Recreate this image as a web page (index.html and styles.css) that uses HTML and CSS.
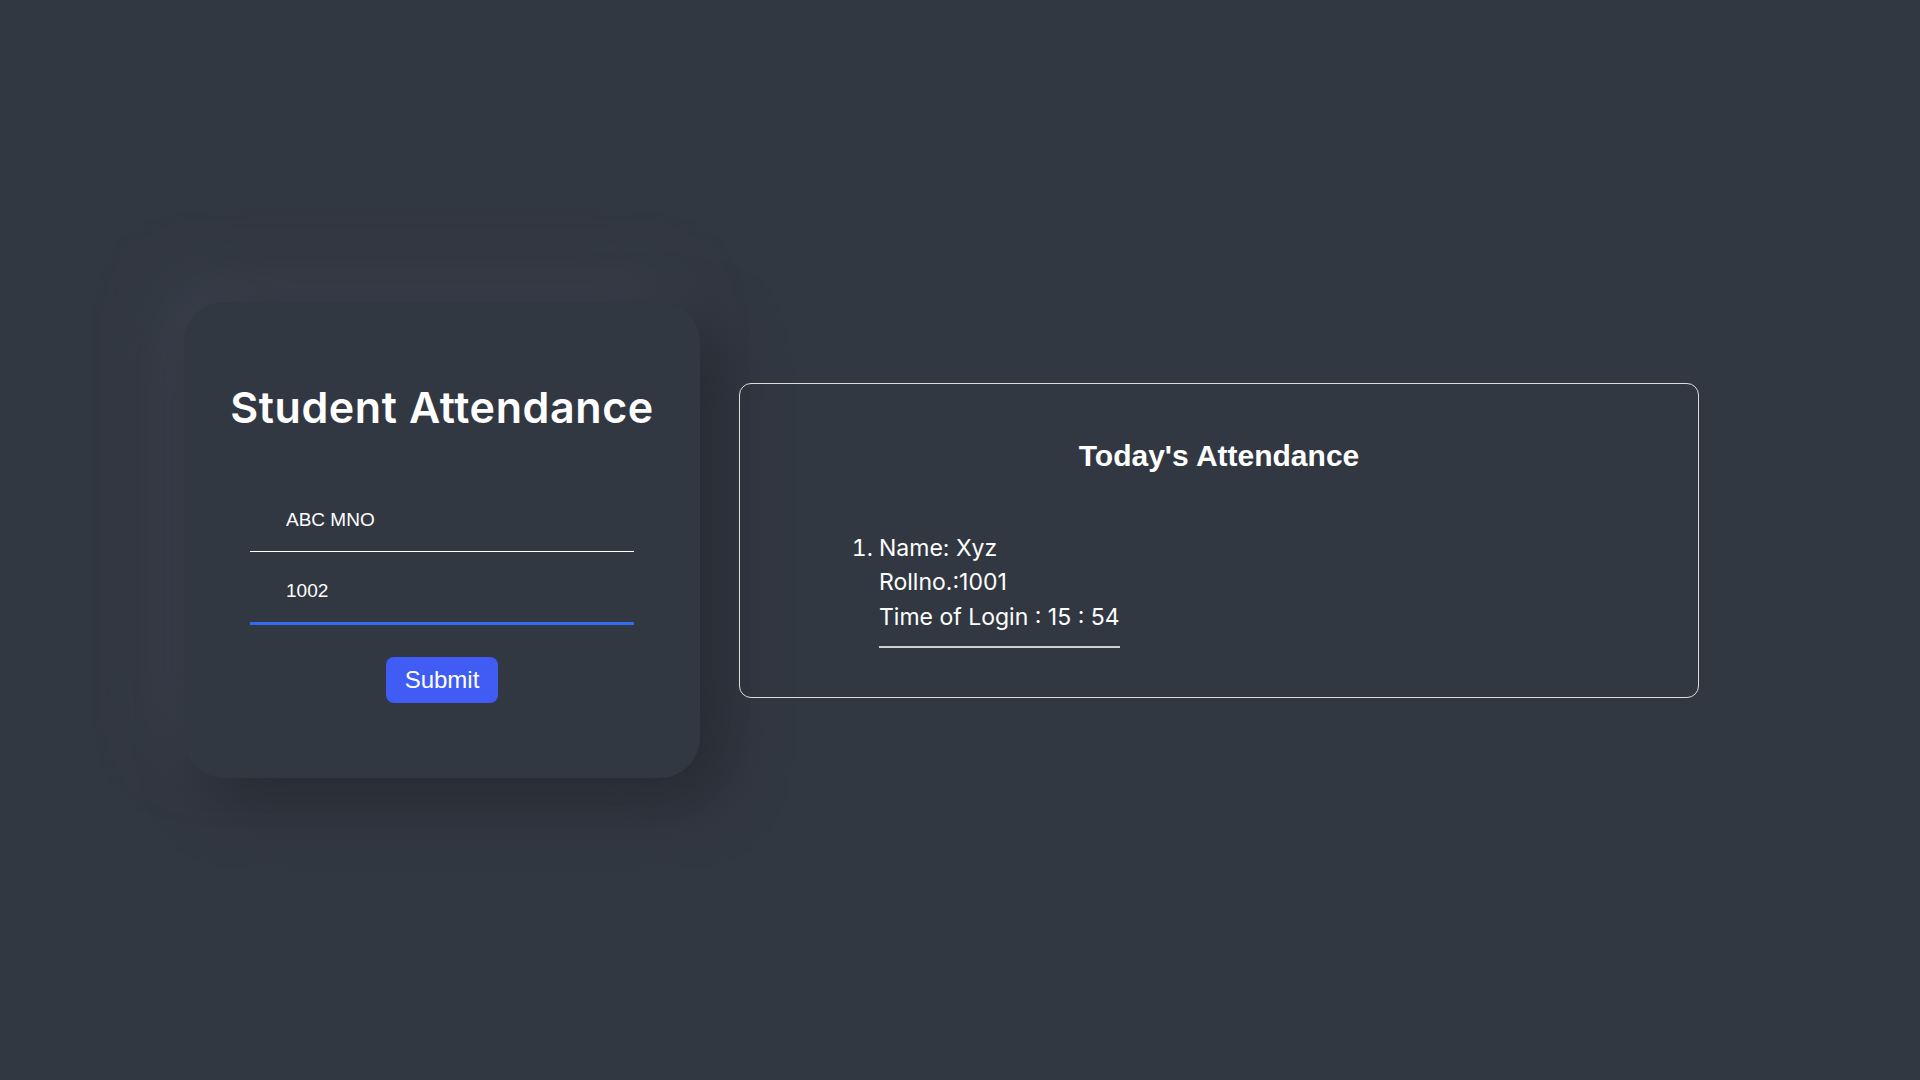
FILE: index.html
```html
<!DOCTYPE html>
<html lang="en">
<head>
<meta charset="utf-8">
<title>Student Attendance</title>
<link rel="stylesheet" href="styles.css">
</head>
<body>
<main class="page">
  <section class="card">
    <h1 class="title">Student Attendance</h1>
    <form class="form">
      <input class="field" type="text" value="ABC MNO">
      <input class="field field-active" type="text" value="1002">
      <button class="submit" type="button">Submit</button>
    </form>
  </section>
  <section class="panel">
    <h2 class="panel-title">Today's Attendance</h2>
    <ol class="list">
      <li class="entry">
        <span class="line">Name: Xyz</span>
        <span class="line">Rollno.:1001</span>
        <span class="line">Time of Login : 15 : 54</span>
      </li>
    </ol>
  </section>
</main>
</body>
</html>
```
FILE: styles.css
```css
html, body {
  margin: 0;
  height: 100%;
  background: #323842;
}

.page {
  box-sizing: border-box;
  height: 1080px;
  display: flex;
  align-items: center;
  padding-left: 184px;
  gap: 39px;
}

.card {
  box-sizing: border-box;
  width: 516px;
  height: 476px;
  border-radius: 40px;
  background: #323842;
  box-shadow: 22px 22px 60px #262b33, -22px -22px 60px #3b414d;
  padding-top: 75px;
  display: flex;
  flex-direction: column;
  align-items: center;
}

.title {
  margin: 0;
  font-family: Inter, "Noto Sans", sans-serif;
  font-weight: 600;
  font-size: 43px;
  letter-spacing: 0.6px;
  line-height: 60px;
  color: #fff;
  white-space: nowrap;
}

.form {
  margin-top: 51px;
  width: 384px;
  display: flex;
  flex-direction: column;
  align-items: center;
}

.field {
  box-sizing: border-box;
  width: 384px;
  height: 64px;
  margin: 0;
  padding: 0 0 0 36px;
  border: none;
  border-bottom: 1px solid #ffffff;
  background: transparent;
  color: #fff;
  font-family: "Liberation Sans", Arial, sans-serif;
  font-size: 19px;
  outline: none;
}

.field + .field {
  margin-top: 7px;
}

.field-active {
  height: 66px;
  border-bottom: 3px solid #306cf0;
}

.submit {
  margin-top: 32px;
  height: 46px;
  padding: 0 19px;
  border: none;
  border-radius: 8px;
  background: #405cf5;
  color: #fff;
  font-family: "Liberation Sans", Arial, sans-serif;
  font-size: 24px;
  cursor: pointer;
}

.panel {
  box-sizing: border-box;
  width: 960px;
  height: 315px;
  border: 1px solid #dcdcdc;
  border-radius: 12px;
  color: #fff;
}

.panel-title {
  margin: 55px 0 0;
  text-align: center;
  font-family: "Liberation Sans", Arial, sans-serif;
  font-weight: 700;
  font-size: 30px;
  line-height: 34px;
}

.list {
  margin: 58px 0 0 99px;
  padding-left: 40px;
  width: fit-content;
  font-family: Inter, "Noto Sans", sans-serif;
  font-size: 23px;
  line-height: 34.5px;
}

.entry {
  padding-bottom: 12px;
  border-bottom: 2px solid #d0d0d0;
}

.line {
  display: block;
}
```
